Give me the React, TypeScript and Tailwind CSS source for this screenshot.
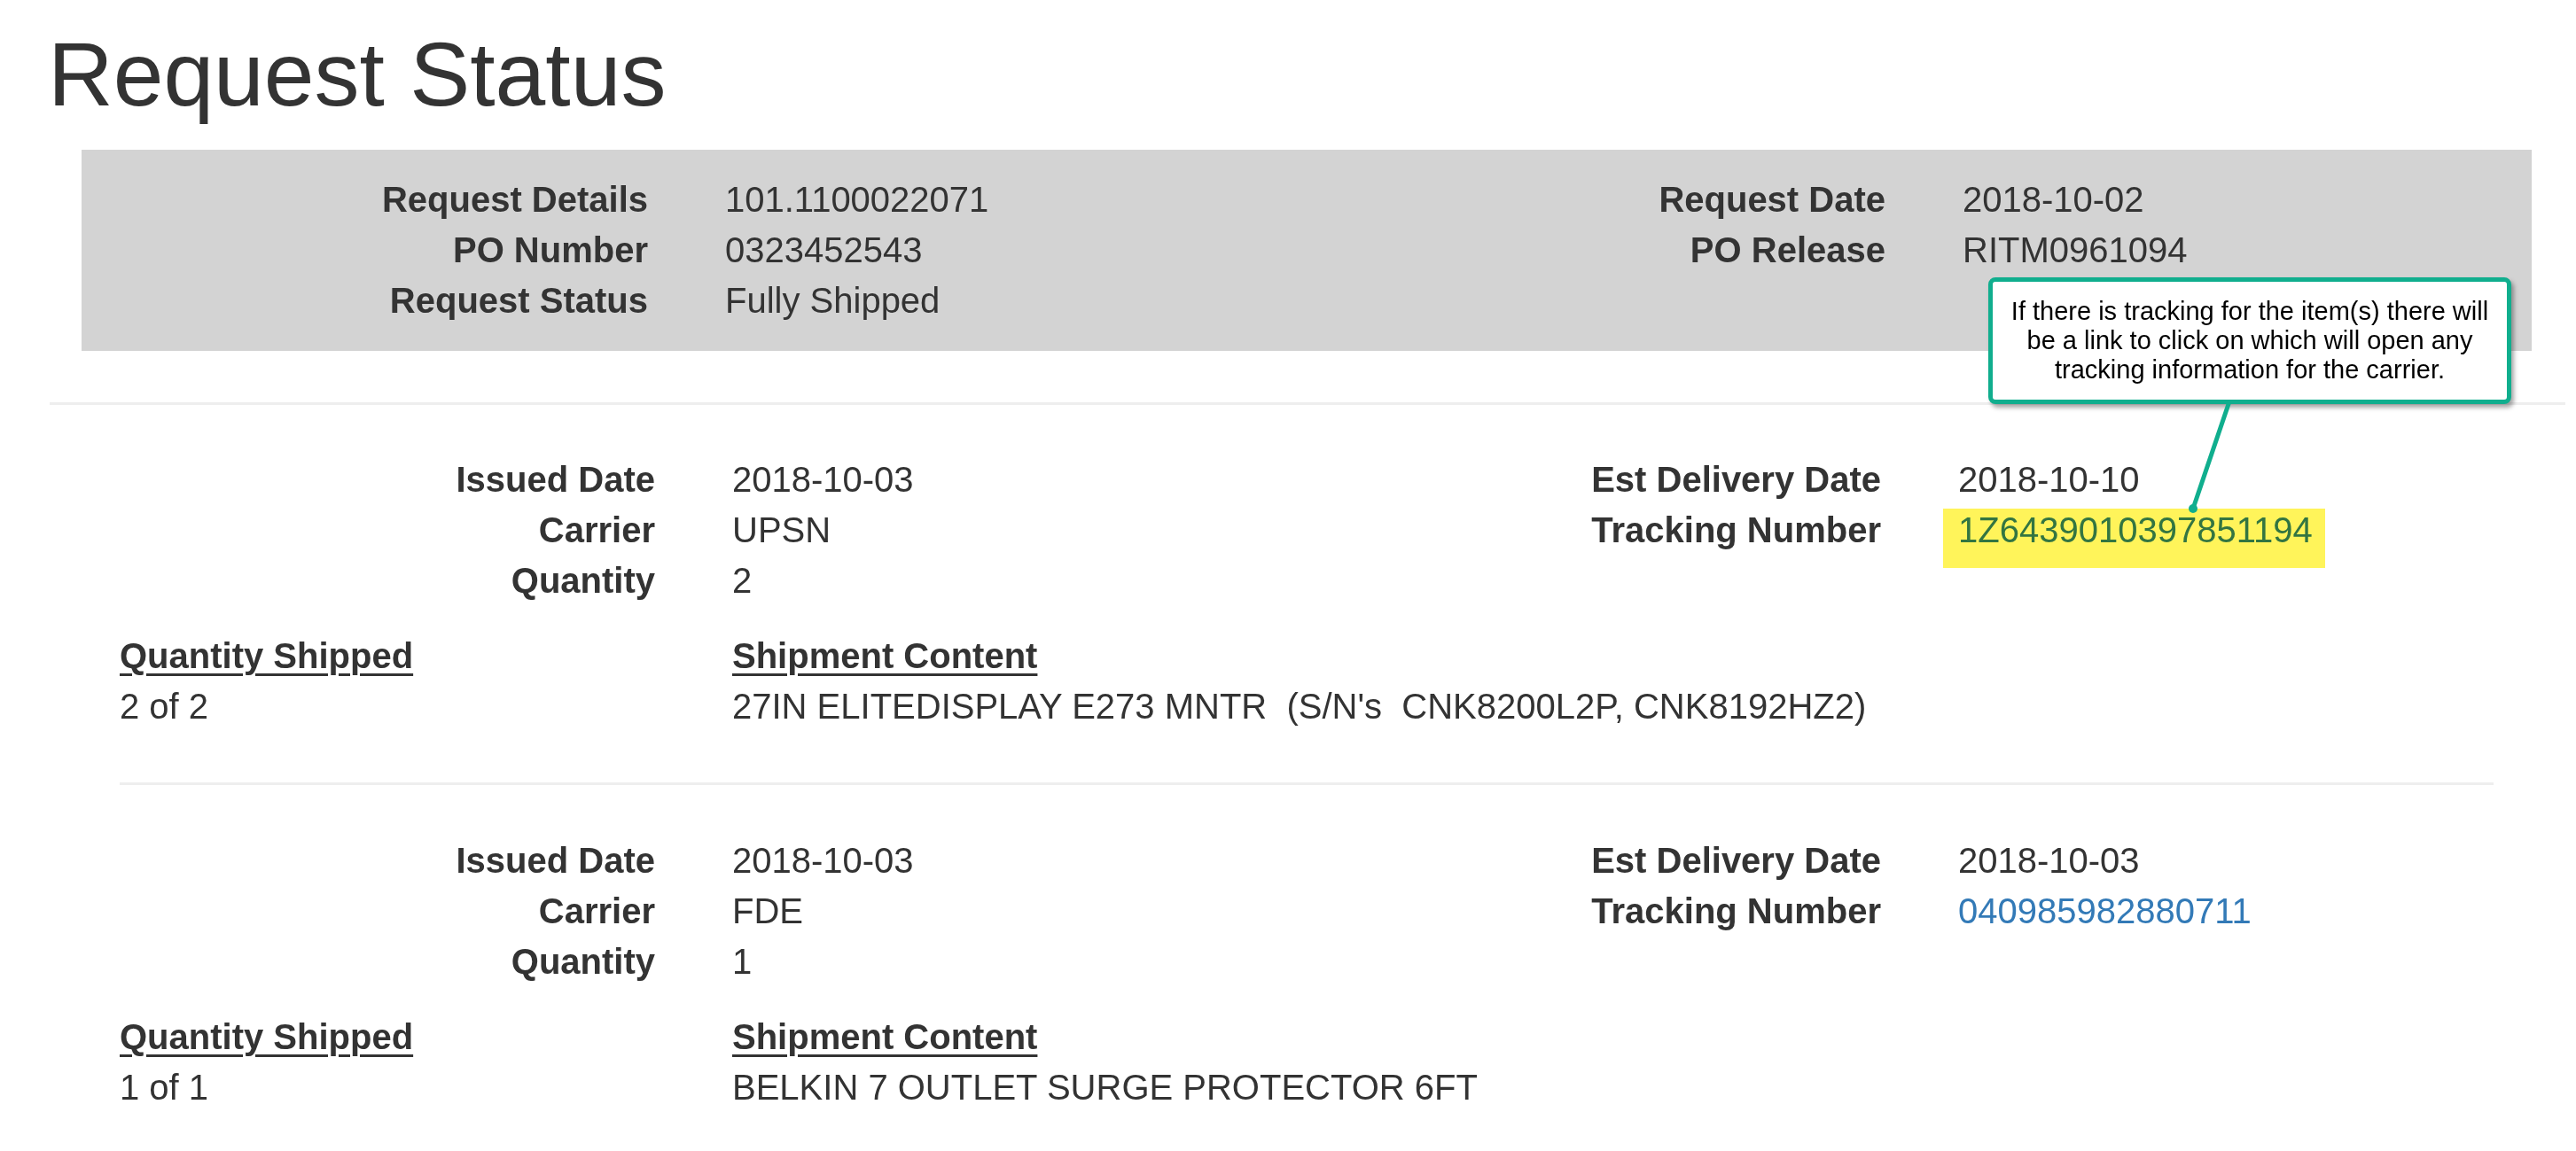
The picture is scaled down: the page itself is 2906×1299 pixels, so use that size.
import React from 'react';

type Pair = { label: string; value: React.ReactNode };

const panelLeft: Pair[] = [
  { label: 'Request Details', value: '101.1100022071' },
  { label: 'PO Number', value: '0323452543' },
  { label: 'Request Status', value: 'Fully Shipped' },
];

const panelRight: Pair[] = [
  { label: 'Request Date', value: '2018-10-02' },
  { label: 'PO Release', value: 'RITM0961094' },
];

const TrackingLink = ({ children }: { children: React.ReactNode }) => (
  <a href="#" className="text-[#337ab7] no-underline">
    {children}
  </a>
);

// label / value rows, label column right-aligned
const Fields = ({ items, labelClass }: { items: Pair[]; labelClass: string }) => (
  <div className="flex flex-col">
    {items.map((it) => (
      <div key={it.label} className="flex h-[57px] items-center">
        <div className={labelClass}>{it.label}</div>
        <div className="pl-[87px] whitespace-nowrap">{it.value}</div>
      </div>
    ))}
  </div>
);

interface Shipment {
  issued: string;
  carrier: string;
  qty: string;
  est: string;
  tracking: React.ReactNode;
  shipped: string;
  content: string;
}

const ShipmentBlock = ({ s }: { s: Shipment }) => (
  <div>
    <div className="flex">
      <div className="w-[1339px] shrink-0">
        <Fields
          labelClass="w-[604px] shrink-0 text-right font-bold"
          items={[
            { label: 'Issued Date', value: s.issued },
            { label: 'Carrier', value: s.carrier },
            { label: 'Quantity', value: s.qty },
          ]}
        />
      </div>
      <div className="flex-1">
        <Fields
          labelClass="w-[648px] shrink-0 text-right font-bold"
          items={[
            { label: 'Est Delivery Date', value: s.est },
            { label: 'Tracking Number', value: s.tracking },
          ]}
        />
      </div>
    </div>
    <div className="mt-[28px] grid grid-cols-[691px_1fr]">
      <div className="h-[57px] flex items-center font-bold underline underline-offset-[6px] decoration-[3px]">
        Quantity Shipped
      </div>
      <div className="h-[57px] flex items-center font-bold underline underline-offset-[6px] decoration-[3px]">
        Shipment Content
      </div>
      <div className="h-[57px] flex items-center">{s.shipped}</div>
      <div className="h-[57px] flex items-center whitespace-pre">{s.content}</div>
    </div>
  </div>
);

const shipments: Shipment[] = [
  {
    issued: '2018-10-03',
    carrier: 'UPSN',
    qty: '2',
    est: '2018-10-10',
    tracking: (
      <span className="relative inline-block">
        <TrackingLink>1Z6439010397851194</TrackingLink>
        <span className="absolute left-[-17px] top-[4px] w-[431px] h-[67px] bg-[#fff45a] mix-blend-multiply" />
      </span>
    ),
    shipped: '2 of 2',
    content: "27IN ELITEDISPLAY E273 MNTR  (S/N's  CNK8200L2P, CNK8192HZ2)",
  },
  {
    issued: '2018-10-03',
    carrier: 'FDE',
    qty: '1',
    est: '2018-10-03',
    tracking: <TrackingLink>040985982880711</TrackingLink>,
    shipped: '1 of 1',
    content: 'BELKIN 7 OUTLET SURGE PROTECTOR 6FT',
  },
];

export default function App() {
  return (
    <div className="relative w-[2906px] h-[1299px] bg-white text-[#333333] text-[40px] leading-[57px] font-['Liberation_Sans',Arial,sans-serif] overflow-hidden">
      <h1 className="pt-[28px] pl-[54px] text-[102px] leading-[112px] font-normal">Request Status</h1>

      <div className="ml-[92px] mr-[50px] mt-[29px] bg-[#d3d3d3] py-[28px] flex">
        <div className="w-[1382px] shrink-0">
          <Fields items={panelLeft} labelClass="w-[639px] shrink-0 text-right font-bold" />
        </div>
        <div className="flex-1">
          <Fields items={panelRight} labelClass="w-[653px] shrink-0 text-right font-bold" />
        </div>
      </div>

      <div className="ml-[56px] mr-[12px] mt-[58px] h-[3px] bg-[#eeeeee]" />

      <div className="ml-[135px] mr-[93px]">
        <div className="pt-[56px] pb-[57px]">
          <ShipmentBlock s={shipments[0]} />
        </div>
        <div className="h-[3px] bg-[#eeeeee]" />
        <div className="pt-[57px]">
          <ShipmentBlock s={shipments[1]} />
        </div>
      </div>

      {/* callout annotation */}
      <div className="absolute left-[2243px] top-[313px] w-[590px] h-[143px] rounded-[8px] border-[5px] border-[#10ae8e] bg-white shadow-[3px_4px_5px_rgba(0,0,0,0.35)] flex items-center justify-center">
        <p className="text-center text-black text-[29px] leading-[33px] font-['Liberation_Sans',Arial,sans-serif] px-[14px]">
          If there is tracking for the item(s) there will be a link to click on which will open any tracking information for
          the carrier.
        </p>
      </div>
      <svg className="absolute left-[2460px] top-[452px]" width="70" height="134" viewBox="0 0 70 134">
        <line x1="54" y1="4" x2="14" y2="122" stroke="#10ae8e" strokeWidth="5" strokeLinecap="round" />
        <circle cx="14" cy="122" r="5" fill="#10ae8e" />
      </svg>
    </div>
  );
}
